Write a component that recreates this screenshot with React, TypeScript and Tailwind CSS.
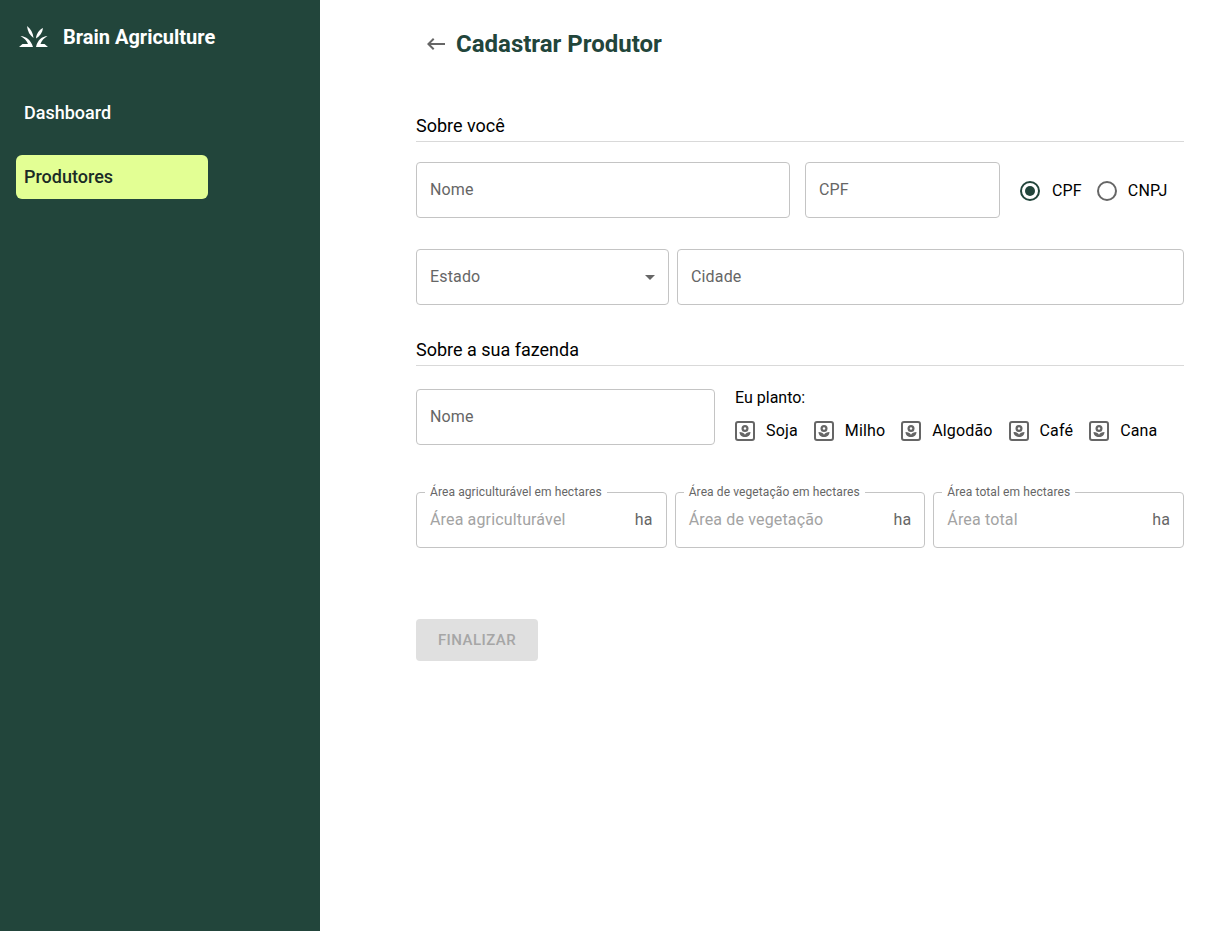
const font = "font-['Roboto',sans-serif]";

function Section({ title }: { title: string }) {
  return (
    <div className="h-[28px] border-b border-[#d9d9d9] text-[18px] leading-[24px] text-black">
      {title}
    </div>
  );
}

function Field({ label, className }: { label: string; className: string }) {
  return (
    <div className={`h-14 rounded border border-[#c4c4c4] px-[13px] flex items-center text-[16px] text-[#666] tracking-[0.15px] ${className}`}>
      {label}
    </div>
  );
}

function Outlined({ legend, placeholder, className }: { legend: string; placeholder: string; className: string }) {
  return (
    <div className={`relative h-14 rounded border border-[#c4c4c4] pl-[13px] pr-[13px] flex items-center justify-between text-[16px] tracking-[0.15px] ${className}`}>
      <span className="absolute left-[8px] -top-[7px] bg-white px-[5px] text-[12px] leading-[12px] text-[#666] tracking-[0.1px]">{legend}</span>
      <span className="text-[#a3a3a3]">{placeholder}</span>
      <span className="text-[#666]">ha</span>
    </div>
  );
}

function Crop({ label }: { label: string }) {
  return (
    <div className="flex items-start gap-[11px] text-[16px] text-black tracking-[0.15px]">
      <svg width="20" height="20" viewBox="0 0 20 20" className="shrink-0 mt-[2px]">
        <rect x="1" y="1" width="18" height="18" rx="2" fill="none" stroke="#666" strokeWidth="2" />
        <circle cx="10" cy="7.500" r="3.500" fill="#666" />
        <circle cx="10" cy="7.500" r="1.200" fill="#fff" />
        <path d="M4.500 11c0 3 2.400 5 5.500 5s5.500-2 5.500-5c-2.600 0-4.500.9-5.500 2.700-1-1.800-2.900-2.700-5.500-2.700z" fill="#666" />
      </svg>
      <span>{label}</span>
    </div>
  );
}

export default function App() {
  return (
    <div className={`flex min-h-[931px] bg-white ${font}`}>
      <aside className="w-80 shrink-0 bg-[#22453b] px-4">
        <div className="flex items-center gap-[14px] h-[74px] pl-[3px]">
          <svg width="30" height="24" viewBox="19 22 30 24" className="shrink-0" fill="#fff">
            <path d="M27 23c3.500 2.500 6 6.500 6.500 12-3.500-2.500-6-6.500-6.500-12z" />
            <path d="M43 25c-.5 4.500-3 8-7 10.500.2-4.500 3-8.500 7-10.500z" />
            <path d="M20.500 33c5.500.5 10.500 4 12.500 11H19l3.500-3h5.500c-1-3.200-4-6-7.500-8z" />
            <path d="M47.500 33c-5.500.5-10 4-11.500 11h12l-3.500-3H40.500c1-3.200 3.500-6 7-8z" />
          </svg>
          <span className="text-[20px] font-bold text-white">Brain Agriculture</span>
        </div>
        <nav className="mt-[17px] flex flex-col gap-5 w-[192px] text-[18px] font-medium">
          <div className="h-11 px-2 pb-[2px] flex items-center text-white">Dashboard</div>
          <div className="h-11 px-2 pb-[2px] flex items-center rounded-md bg-[#e3ff94] text-[#1a2b26]">Produtores</div>
        </nav>
      </aside>
      <main className="w-[768px] ml-24">
        <div className="flex items-center h-[44px] mt-[22px] ml-2 gap-2">
          <svg width="24" height="24" viewBox="0 0 24 24" fill="#666"><path d="M21 11H6.830l3.580-3.590L9 6l-6 6 6 6 1.410-1.410L6.830 13H21z" /></svg>
          <h1 className="text-[24px] font-bold text-[#22453b]">Cadastrar Produtor</h1>
        </div>
        <div className="mt-[48px]"><Section title="Sobre você" /></div>
        <div className="flex items-center mt-5">
          <Field label="Nome" className="w-[374px]" />
          <Field label="CPF" className="w-[195px] ml-[15px]" />
          <div className="flex items-center ml-5 pt-[2px] text-[16px] text-black tracking-[0.15px]">
            <span className="w-5 h-5 rounded-full border-2 border-[#22453b] flex items-center justify-center">
              <span className="w-[10px] h-[10px] rounded-full bg-[#22453b]" />
            </span>
            <span className="ml-[12px]">CPF</span>
            <span className="w-5 h-5 rounded-full border-2 border-[#666] ml-[15px]" />
            <span className="ml-[11px]">CNPJ</span>
          </div>
        </div>
        <div className="flex gap-2 mt-[31px]">
          <div className="relative w-[253px] h-14 rounded border border-[#c4c4c4] px-[13px] flex items-center text-[16px] text-[#666] tracking-[0.15px]">
            Estado
            <span className="absolute right-[13px] top-[25px] border-x-[5px] border-x-transparent border-t-[5px] border-t-[#666]" />
          </div>
          <Field label="Cidade" className="flex-1" />
        </div>
        <div className="mt-[33px]"><Section title="Sobre a sua fazenda" /></div>
        <div className="flex mt-[23px]">
          <Field label="Nome" className="w-[299px]" />
          <div className="ml-5 -mt-[1px]">
            <div className="text-[16px] leading-[20px] text-black">Eu planto:</div>
            <div className="flex gap-4 mt-[11px]">
              <Crop label="Soja" />
              <Crop label="Milho" />
              <Crop label="Algodão" />
              <Crop label="Café" />
              <Crop label="Cana" />
            </div>
          </div>
        </div>
        <div className="flex gap-2 mt-[47px]">
          <Outlined legend="Área agriculturável em hectares" placeholder="Área agriculturável" className="flex-1" />
          <Outlined legend="Área de vegetação em hectares" placeholder="Área de vegetação" className="flex-1" />
          <Outlined legend="Área total em hectares" placeholder="Área total" className="flex-1" />
        </div>
        <div className="mt-[71px] w-[122px] h-[42px] rounded bg-[#e0e0e0] text-[#a6a6a6] flex items-center justify-center text-[15px] font-medium tracking-[0.46px]">
          FINALIZAR
        </div>
      </main>
    </div>
  );
}
